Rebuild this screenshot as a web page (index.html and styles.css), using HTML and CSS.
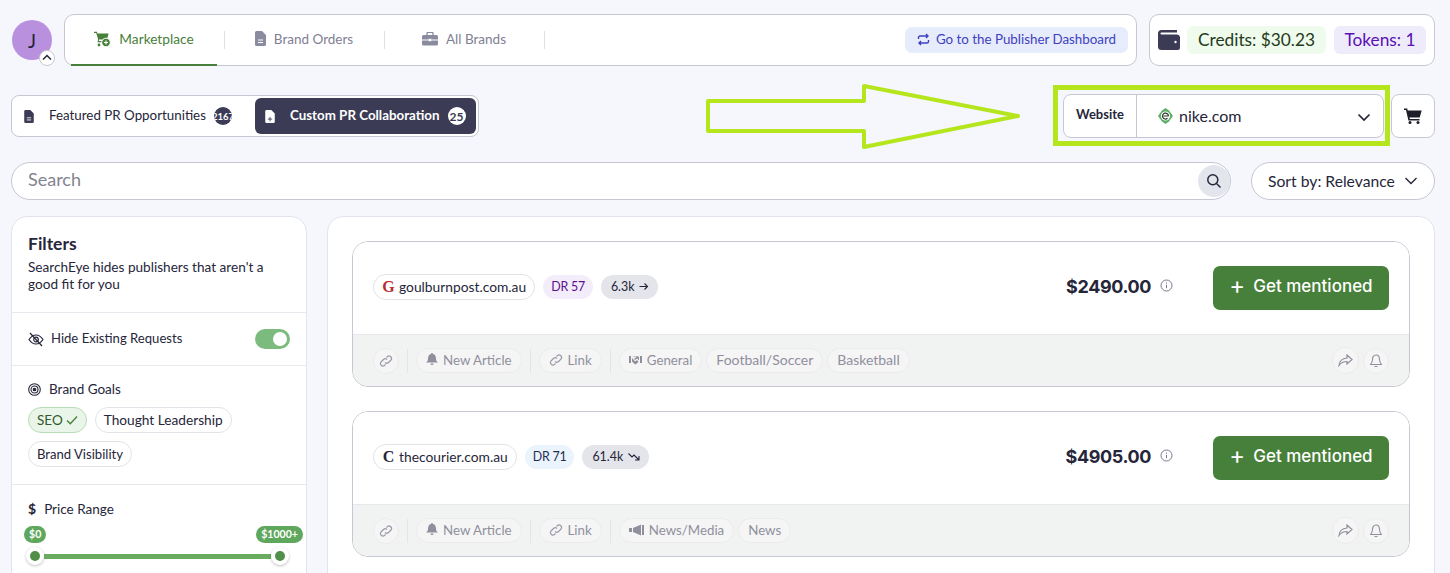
FILE: index.html
```html
<!DOCTYPE html>
<html lang="en">
<head>
<meta charset="utf-8">
<title>Marketplace</title>
<link rel="stylesheet" href="styles.css">
</head>
<body>
<div class="page">
  <header class="top">
    <div class="avatar">J
      <span class="avatar-caret"><svg width="12" height="12" viewBox="0 0 12 12"><path d="M2 7.500 6 3.500l4 4" fill="none" stroke="#26263a" stroke-width="1.500"/></svg></span>
    </div>
    <nav class="nav">
      <a class="nav-item active">
        <svg width="17" height="16" viewBox="0 0 17 16"><path d="M0 .8h3l.4 1.600h11.200l-1.600 6.200H5L4.700 10H13v1.300H3.500l.6-3L2.200 2H0z" fill="#47803a"/><circle cx="5" cy="14" r="1.400" fill="#47803a"/><circle cx="12" cy="11.500" r="4.300" fill="#47803a" stroke="#fff"/><path d="M12 9.500v4M10 11.500h4" stroke="#fff" stroke-width="1.100"/></svg>
        Marketplace</a>
      <a class="nav-item">
        <svg width="11" height="15" viewBox="0 0 11 15"><path d="M1.500 0H7l4 4v9.500a1.500 1.500 0 0 1-1.500 1.500h-8A1.500 1.500 0 0 1 0 13.500v-12A1.500 1.500 0 0 1 1.500 0z" fill="#8a8b9e"/><path d="M3 9h5M3 11.500h5" stroke="#fff"/></svg>
        Brand Orders</a>
      <a class="nav-item">
        <svg width="16" height="14" viewBox="0 0 16 14"><path d="M5 3V1.500A1.200 1.200 0 0 1 6.200.3h3.600A1.200 1.200 0 0 1 11 1.500V3" fill="none" stroke="#8a8b9e" stroke-width="1.300"/><rect y="3" width="16" height="10.500" rx="1.500" fill="#8a8b9e"/><path d="M0 8h6.500M9.500 8H16" stroke="#fff"/><rect x="6.500" y="6.800" width="3" height="2.400" fill="#fff"/></svg>
        All Brands</a>
      <span class="nav-end"></span>
      <a class="publisher">
        <svg width="13" height="13" viewBox="0 0 13 13" fill="none" stroke="#3f3fc0" stroke-width="1.400"><path d="M1.500 6V4.500a1.500 1.500 0 0 1 1.500-1.500h8M9 1l2 2-2 2M11.500 7v1.500a1.500 1.500 0 0 1-1.500 1.500H2M4 8l-2 2 2 2"/></svg>
        Go to the Publisher Dashboard</a>
    </nav>
    <div class="wallet">
      <svg width="22" height="20" viewBox="0 0 22 20"><path d="M3.500 0h15.500v2.500H3.500a1 1 0 0 0 0 2H19a3 3 0 0 1 3 2.500v10.500a2.500 2.500 0 0 1-2.500 2.500h-16A3.500 3.500 0 0 1 0 16.500v-13A3.500 3.500 0 0 1 3.500 0z" fill="#3b3b55"/><circle cx="17.500" cy="12" r="1.200" fill="#fff"/></svg>
      <span class="credits">Credits: $30.23</span>
      <span class="tokens">Tokens: 1</span>
    </div>
  </header>

  <section class="row2">
    <div class="tabs">
      <a class="tab">
        <svg width="10" height="13" viewBox="0 0 11 15"><path d="M1.500 0H7l4 4v9.500a1.500 1.500 0 0 1-1.500 1.500h-8A1.500 1.500 0 0 1 0 13.500v-12A1.500 1.500 0 0 1 1.500 0z" fill="#3b3b55"/><path d="M3 9h5M3 11.500h5" stroke="#fff"/></svg>
        <span class="tab-label">Featured PR Opportunities</span>
        <span class="count dark"><span>2167</span></span>
      </a>
      <a class="tab on">
        <svg width="10" height="13" viewBox="0 0 11 15"><path d="M1.500 0H7l4 4v9.500a1.500 1.500 0 0 1-1.500 1.500h-8A1.500 1.500 0 0 1 0 13.500v-12A1.500 1.500 0 0 1 1.500 0z" fill="#fff"/><path d="M5.500 8v5M3 10.500h5" stroke="#3b3b55"/></svg>
        <span class="tab-label">Custom PR Collaboration</span>
        <span class="count light">25</span>
      </a>
    </div>
    <svg class="big-arrow" width="316" height="68" viewBox="0 0 316 68"><path d="M2 19H158V4L312 34 158 65V49H2z" fill="none" stroke="#b5e61d" stroke-width="4" stroke-linejoin="round"/></svg>
    <div class="highlight">
      <div class="website">
        <span class="website-label">Website</span>
        <span class="website-value">
          <svg width="15" height="16" viewBox="0 0 15 16"><path d="M7.500 0 11 2.500 15 8l-4 5.500L7.500 16 4 13.500 0 8l4-5.500z" fill="#5fae67"/><circle cx="7.500" cy="8" r="4.600" fill="#fff"/><path d="M10.500 8a3 3 0 1 0-1 2.300M5.500 8h5" fill="none" stroke="#26352a" stroke-width="1.200"/></svg>
          <span class="site-name">nike.com</span>
          <svg class="chev" width="14" height="9" viewBox="0 0 14 9"><path d="M1.500 1.500 7 7l5.500-5.500" fill="none" stroke="#26263a" stroke-width="1.700"/></svg>
        </span>
      </div>
    </div>
    <button class="cart">
      <svg width="18" height="16" viewBox="0 0 18 16"><path d="M0 .5h3.200l.5 2h14l-2 7H5.500l.3 1.500H15.500v1.500H4.400L2 2H0z" fill="#1e1e2a"/><circle cx="6" cy="14.500" r="1.500" fill="#1e1e2a"/><circle cx="14" cy="14.500" r="1.500" fill="#1e1e2a"/></svg>
    </button>
  </section>

  <section class="row3">
    <div class="search">
      <span class="search-text">Search</span>
      <span class="search-btn"><svg width="16" height="16" viewBox="0 0 16 16" fill="none" stroke="#26263a" stroke-width="1.500"><circle cx="6.800" cy="6.800" r="5"/><path d="m10.500 10.500 4 4"/></svg></span>
    </div>
    <div class="sort"><span>Sort by: Relevance</span>
      <svg width="14" height="8" viewBox="0 0 14 8"><path d="M1.500 1 7 6.500 12.500 1" fill="none" stroke="#26263a" stroke-width="1.400"/></svg>
    </div>
  </section>

  <main class="content">
    <aside class="filters">
      <div class="f-head">
        <h2>Filters</h2>
        <p>SearchEye hides publishers that aren't a good fit for you</p>
      </div>
      <div class="f-toggle">
        <svg width="16" height="15" viewBox="0 0 16 15" fill="none" stroke="#26263a" stroke-width="1.200"><path d="M1 7.500C3 4.500 5.300 3 8 3s5 1.500 7 4.500c-2 3-4.300 4.500-7 4.500S3 10.500 1 7.500z"/><circle cx="8" cy="7.500" r="2.300"/><path d="m2 1 12 13"/></svg>
        <span class="f-label">Hide Existing Requests</span>
        <span class="switch"><i></i></span>
      </div>
      <div class="f-goals">
        <div class="f-title">
          <svg width="13" height="13" viewBox="0 0 13 13" fill="none" stroke="#26263a" stroke-width="1.100"><circle cx="6.500" cy="6.500" r="5.800"/><circle cx="6.500" cy="6.500" r="3.500"/><circle cx="6.500" cy="6.500" r="1.300" fill="#26263a"/></svg>
          Brand Goals</div>
        <div class="chips">
          <span class="chip sel">SEO <svg width="12" height="10" viewBox="0 0 12 10"><path d="M1 5.500 4.300 8.800 11 1.500" fill="none" stroke="#47803a" stroke-width="1.300"/></svg></span>
          <span class="chip chip-wide">Thought Leadership</span>
          <span class="chip chip-narrow">Brand Visibility</span>
        </div>
      </div>
      <div class="f-price">
        <div class="f-title"><span class="dollar">$</span> Price Range</div>
        <div class="range-labels"><span class="bubble">$0</span><span class="bubble">$1000+</span></div>
        <div class="slider"><span class="thumb"></span><span class="bar"></span><span class="thumb"></span></div>
      </div>
    </aside>

    <section class="results">
      <article class="card">
        <div class="card-main">
          <span class="domain"><span class="logo-g">G</span>goulburnpost.com.au</span>
          <span class="dr purple">DR 57</span>
          <span class="traffic">6.3k <svg width="10" height="9" viewBox="0 0 10 9"><path d="M.5 4.500h8M5.500 1.500l3 3-3 3" fill="none" stroke="#26263a" stroke-width="1.100"/></svg></span>
          <span class="price">$2490.00</span>
          <svg class="info" width="13" height="13" viewBox="0 0 13 13" fill="none" stroke="#77788a"><circle cx="6.500" cy="6.500" r="5.500"/><path d="M6.500 5.800v3.400M6.500 3.500v1.200"/></svg>
          <a class="cta"><span class="plus">+</span>Get mentioned</a>
        </div>
        <div class="card-foot">
          <span class="round"><svg width="14" height="14" viewBox="0 0 14 14" fill="none" stroke="#9a9ba8" stroke-width="1.200"><path d="M6 8.500a2.500 2.500 0 0 0 3.500 0l2.500-2.500A2.500 2.500 0 0 0 8.500 2.500l-1 1M8 5.500a2.500 2.500 0 0 0-3.500 0L2 8a2.500 2.500 0 0 0 3.500 3.500l1-1"/></svg></span>
          <i class="sep"></i>
          <span class="tag"><svg width="12" height="13" viewBox="0 0 12 13"><path d="M6 0a1 1 0 0 1 1 1c2 .5 3 2.200 3 4.500 0 2 .7 3 2 4H0c1.300-1 2-2 2-4C2 3.200 3 1.500 5 1a1 1 0 0 1 1-1zM4.500 10.500h3a1.500 1.500 0 0 1-3 0z" fill="#8f909c"/></svg>New Article</span>
          <i class="sep"></i>
          <span class="tag"><svg width="14" height="14" viewBox="0 0 14 14" fill="none" stroke="#9a9ba8" stroke-width="1.200"><path d="M6 8.500a2.500 2.500 0 0 0 3.500 0l2.500-2.500A2.500 2.500 0 0 0 8.500 2.500l-1 1M8 5.500a2.500 2.500 0 0 0-3.500 0L2 8a2.500 2.500 0 0 0 3.500 3.500l1-1"/></svg>Link</span>
          <i class="sep"></i>
          <span class="tag"><svg width="13" height="10" viewBox="0 0 13 10"><path d="M0 1h2v7H0zM11 1h2v7h-2zM3 2l3-1 1.500 1L5 4l1 1 2-1.500L10 5.500V2L8 1 6.500 1.500 5 1 3 2zM3 3v3.500L5.500 9l1 .5 3-2.500L8 5 6 6.500 4 4z" fill="#8f909c"/></svg>General</span>
          <span class="tag big">Football/Soccer</span>
          <span class="tag big">Basketball</span>
          <span class="foot-right">
            <span class="round lg"><svg width="15" height="13" viewBox="0 0 15 13" fill="none" stroke="#8f909c" stroke-width="1.200"><path d="M9 1l5 4.500L9 10V7.500C5.500 7.500 3 8.500 1 11.500c.3-4 3-7 8-7.500z"/></svg></span>
            <span class="round"><svg width="12" height="14" viewBox="0 0 12 14" fill="none" stroke="#8f909c" stroke-width="1.100"><path d="M6 1c2.500 0 3.500 2 3.500 4.500 0 2.500.7 3.500 2 5H.5c1.300-1.500 2-2.500 2-5C2.500 3 3.500 1 6 1zM4.500 12.500h3"/></svg></span>
          </span>
        </div>
      </article>

      <article class="card">
        <div class="card-main">
          <span class="domain"><span class="logo-c">C</span>thecourier.com.au</span>
          <span class="dr blue">DR 71</span>
          <span class="traffic">61.4k <svg width="12" height="9" viewBox="0 0 12 9"><path d="M.5 1.500 4 5l2-2 4.500 4.500M11 4v4H7" fill="none" stroke="#26263a" stroke-width="1.100"/></svg></span>
          <span class="price">$4905.00</span>
          <svg class="info" width="13" height="13" viewBox="0 0 13 13" fill="none" stroke="#77788a"><circle cx="6.500" cy="6.500" r="5.500"/><path d="M6.500 5.800v3.400M6.500 3.500v1.200"/></svg>
          <a class="cta"><span class="plus">+</span>Get mentioned</a>
        </div>
        <div class="card-foot">
          <span class="round"><svg width="14" height="14" viewBox="0 0 14 14" fill="none" stroke="#9a9ba8" stroke-width="1.200"><path d="M6 8.500a2.500 2.500 0 0 0 3.500 0l2.500-2.500A2.500 2.500 0 0 0 8.500 2.500l-1 1M8 5.500a2.500 2.500 0 0 0-3.500 0L2 8a2.500 2.500 0 0 0 3.500 3.500l1-1"/></svg></span>
          <i class="sep"></i>
          <span class="tag"><svg width="12" height="13" viewBox="0 0 12 13"><path d="M6 0a1 1 0 0 1 1 1c2 .5 3 2.200 3 4.500 0 2 .7 3 2 4H0c1.300-1 2-2 2-4C2 3.200 3 1.500 5 1a1 1 0 0 1 1-1zM4.500 10.500h3a1.500 1.500 0 0 1-3 0z" fill="#8f909c"/></svg>New Article</span>
          <i class="sep"></i>
          <span class="tag"><svg width="14" height="14" viewBox="0 0 14 14" fill="none" stroke="#9a9ba8" stroke-width="1.200"><path d="M6 8.500a2.500 2.500 0 0 0 3.500 0l2.500-2.500A2.500 2.500 0 0 0 8.500 2.500l-1 1M8 5.500a2.500 2.500 0 0 0-3.500 0L2 8a2.500 2.500 0 0 0 3.500 3.500l1-1"/></svg>Link</span>
          <i class="sep"></i>
          <span class="tag"><svg width="15" height="12" viewBox="0 0 15 12"><path d="M0 4h3v4H0zM4 4l8-3.500v11L4 8zM13 1h2v10h-2z" fill="#8f909c"/></svg>News/Media</span>
          <span class="tag">News</span>
          <span class="foot-right">
            <span class="round lg"><svg width="15" height="13" viewBox="0 0 15 13" fill="none" stroke="#8f909c" stroke-width="1.200"><path d="M9 1l5 4.500L9 10V7.500C5.500 7.500 3 8.500 1 11.500c.3-4 3-7 8-7.500z"/></svg></span>
            <span class="round"><svg width="12" height="14" viewBox="0 0 12 14" fill="none" stroke="#8f909c" stroke-width="1.100"><path d="M6 1c2.500 0 3.500 2 3.500 4.500 0 2.500.7 3.500 2 5H.5c1.300-1.500 2-2.500 2-5C2.500 3 3.500 1 6 1zM4.500 12.500h3"/></svg></span>
          </span>
        </div>
      </article>
    </section>
  </main>
</div>
</body>
</html>
```
FILE: styles.css
```css
* { box-sizing: border-box; }
html, body { margin: 0; height: 573px; overflow: hidden; }
body { background: #f5f7fc; font-family: "Lato", "Noto Sans", sans-serif; color: #26263a; }
svg { flex: none; display: block; }
.page { padding: 14px 15px 0 11px; }

.top { display: flex; align-items: flex-start; height: 52px; }
.avatar { position: relative; flex: none; width: 40px; height: 40px; margin: 6px 12px 0 1px; border-radius: 50%; background: #b990de; display: flex; align-items: center; justify-content: center; font-size: 19px; }
.avatar-caret { position: absolute; right: -3px; bottom: -6px; width: 16px; height: 16px; border-radius: 50%; background: #fff; border: 1px solid #c8c9d2; display: flex; align-items: center; justify-content: center; }
.nav { flex: none; width: 1073px; height: 52px; background: #fff; border: 1px solid #c6c7d2; border-radius: 10px; display: flex; align-items: center; padding: 0 8px 0 6px; }
.nav-item { height: 50px; display: flex; align-items: center; justify-content: center; gap: 8px; font-size: 13.5px; color: #7f8094; width: 160px; padding: 0 2px 3px 0; position: relative; }
.nav-item::after { content: ""; position: absolute; right: 0; top: 16px; height: 18px; width: 1px; background: #dfe0e6; }
.nav-item.active { color: #47803a; width: 146px; margin-right: 8px; padding-right: 0; font-size: 13.7px; }
.nav-item.active::after { right: -8px; }
.nav-item.active::before { content: ""; position: absolute; left: 0; right: 0; bottom: -1px; height: 2px; background: #47803a; }
.nav-end { flex: 1; }
.publisher { height: 26px; padding: 0 12px 2px; background: #e6ecfb; border-radius: 7px; color: #3f3fc0; font-size: 13.35px; display: flex; align-items: center; gap: 6px; white-space: nowrap; }
.wallet { flex: none; margin-left: 12px; width: 286px; height: 52px; background: #fff; border: 1px solid #c6c7d2; border-radius: 10px; display: flex; align-items: center; padding: 0 8px; gap: 8px; font-size: 17.3px; }
.wallet svg { margin-right: -1px; }
.credits { height: 28px; width: 139px; padding-bottom: 1px; background: #effbec; border-radius: 6px; display: flex; align-items: center; justify-content: center; color: #1f3a20; }
.tokens { height: 28px; width: 92px; padding-bottom: 1px; background: #eeecfb; border-radius: 6px; display: flex; align-items: center; justify-content: center; color: #5a10b5; }

.row2 { display: flex; align-items: flex-start; margin-top: 19px; height: 66px; }
.tabs { margin-top: 10px; width: 468px; height: 42px; padding: 2px; background: #fff; border: 1px solid #c6c7d2; border-radius: 8px; display: flex; }
.tab { height: 36px; display: flex; align-items: center; border-radius: 6px; font-size: 13.35px; white-space: nowrap; }
.tab:first-child { width: 241px; padding-left: 10px; }
.tab.on { flex: 1; background: #3b3b55; color: #fff; padding-left: 10px; font-weight: 700; }
.tab-label { margin-left: 15px; padding-bottom: 2px; }
.count { width: 18px; height: 18px; border-radius: 50%; display: flex; align-items: center; justify-content: center; font-size: 12px; margin-left: 8px; overflow: hidden; font-weight: 700; }
.count.dark { background: #3b3b55; color: #fff; font-size: 9.5px; }
.count.dark span { flex: none; }
.count.light { background: #fff; color: #3b3b55; }
.big-arrow { margin: -3px 0 0 227px; flex: none; }
.highlight { flex: none; margin-left: 31px; width: 337px; height: 61px; border: 5px solid #b5e61d; padding: 4px 1px 0 5px; }
.website { height: 44px; background: #fff; border: 1px solid #c6c7d2; border-radius: 8px; display: flex; }
.website-label { width: 73px; border-right: 1px solid #c6c7d2; font-size: 13px; font-weight: 700; display: flex; align-items: center; justify-content: center; padding-bottom: 4px; }
.website-value { flex: 1; display: flex; align-items: center; gap: 6px; padding: 0 12px 0 21px; font-size: 16px; }
.site-name { padding-bottom: 2px; }
.chev { margin-left: auto; margin-top: 3px; }
.cart { flex: none; margin: 9px 0 0 1px; width: 44px; height: 44px; background: #fff; border: 1px solid #c6c7d2; border-radius: 8px; display: flex; align-items: center; justify-content: center; padding: 0; }

.row3 { display: flex; gap: 20px; margin-top: 11px; }
.search { flex: none; width: 1220px; height: 38px; background: #fff; border: 1px solid #c6c7d2; border-radius: 19px; display: flex; align-items: center; padding: 0 0 0 16px; font-size: 18px; color: #83848f; }
.search-text { flex: 1; padding-bottom: 5px; }
.search-btn { width: 32px; height: 32px; border-radius: 50%; background: #e3e5ec; display: flex; align-items: center; justify-content: center; }
.sort { flex: none; width: 184px; height: 38px; background: #fff; border: 1px solid #c6c7d2; border-radius: 19px; display: flex; align-items: center; gap: 9px; padding-left: 16px; font-size: 15.7px; white-space: nowrap; }
.sort span { padding-bottom: 1px; }

.content { display: flex; gap: 20px; margin-top: 16px; align-items: flex-start; }
.filters { flex: none; width: 296px; height: 400px; background: #fff; border: 1px solid #e1e4ee; border-radius: 16px; font-size: 13.5px; }
.f-head { padding: 17px 16px 0; height: 96px; border-bottom: 1px solid #e8e9ef; }
.f-head h2 { margin: 0 0 5px; font-size: 17.5px; line-height: 20px; font-weight: 700; }
.f-head p { margin: 0; max-width: 245px; font-size: 13.6px; line-height: 17px; }
.f-toggle { height: 53px; display: flex; align-items: center; padding: 0 16px; border-bottom: 1px solid #e8e9ef; }
.f-label { flex: 1; margin-left: 7px; font-size: 13.1px; padding-bottom: 2px; }
.switch { width: 35px; height: 20px; border-radius: 10px; background: #7cbb7e; display: flex; align-items: center; justify-content: flex-end; padding-right: 3px; }
.switch i { width: 14px; height: 14px; border-radius: 50%; background: #fff; }
.f-goals { height: 119px; padding: 15px 16px 0; border-bottom: 1px solid #e8e9ef; }
.f-title { display: flex; align-items: center; gap: 8px; line-height: 16px; }
.chips { display: flex; flex-wrap: wrap; gap: 8px; margin-top: 10px; }
.chip { height: 26px; padding: 0 8px 1px; border: 1px solid #e2e3e9; border-radius: 13px; display: flex; align-items: center; gap: 3px; font-size: 13.5px; }
.chip-wide { font-size: 13.7px; }
.chip-narrow { font-size: 13.1px; }
.chip.sel { background: #e9f5e8; border-color: #b9dcb9; color: #2f5a2b; }
.f-price { padding: 16px 16px 0; }
.dollar { font-weight: 700; font-size: 14px; }
.range-labels { display: flex; justify-content: space-between; margin: 9px -13px 0 -4px; }
.bubble { height: 17px; padding: 0 5px; background: #5ea75c; color: #fff; border-radius: 9px; font-size: 10.6px; line-height: 17px; font-weight: 700; }
.slider { display: flex; align-items: center; margin: 4px 1px 0 -2px; }
.thumb { width: 18px; height: 18px; border-radius: 50%; background: #fff; box-shadow: 0 1px 3px rgba(0,0,0,.25); display: flex; align-items: center; justify-content: center; flex: none; }
.thumb::after { content: ""; width: 10px; height: 10px; border-radius: 50%; background: #4f8f48; }
.bar { flex: 1; height: 5px; background: #6aac5f; }

.results { flex: none; width: 1108px; height: 400px; background: #fff; border: 1px solid #e1e4ee; border-radius: 16px; padding: 24px 24px 0; }
.card { height: 146px; border: 1px solid #c6c7d2; border-radius: 16px; overflow: hidden; margin-bottom: 24px; }
.card-main { height: 93px; background: #fff; display: flex; align-items: center; padding: 0 20px; border-bottom: 1px solid #e6e7ea; }
.domain { height: 26px; margin-top: -2px; padding: 0 8px 1px 7px; border: 1px solid #e2e3e9; border-radius: 13px; display: flex; align-items: center; font-size: 13.8px; gap: 3px; }
.logo-g, .logo-c { width: 15px; display: flex; justify-content: center; font-family: "Liberation Serif", serif; font-weight: 700; font-size: 16px; }
.logo-g { color: #bb2a30; }
.logo-c { color: #26263a; }
.dr { margin: -2px 0 0 8px; height: 24px; padding: 0 8px 1px; border-radius: 12px; display: flex; align-items: center; font-size: 12.4px; letter-spacing: -.2px; }
.dr.purple { background: #f3edfb; color: #5a1090; }
.dr.blue { background: #ebf3fd; color: #1e3050; }
.traffic { margin: -2px 0 0 8px; height: 24px; padding: 0 9px 1px 10px; border-radius: 12px; background: #e3e5ea; display: flex; align-items: center; gap: 5px; font-size: 12.4px; }
.price { margin-left: auto; padding-bottom: 4px; font-family: "Inter", sans-serif; font-size: 18px; font-weight: 700; letter-spacing: -.4px; }
.info { margin: 0 0 5px 9px; }
.cta { margin-left: 40px; width: 176px; height: 44px; padding-bottom: 4px; background: #47803a; border-radius: 7px; color: #fff; display: flex; align-items: center; justify-content: center; gap: 8px; font-family: "Inter", sans-serif; font-size: 17px; font-weight: 500; }
.plus { font-size: 24px; font-weight: 400; line-height: 24px; margin-top: -1px; }
.card-foot { height: 51px; background: #f1f2f2; display: flex; align-items: center; padding: 0 20px; gap: 4px; color: #8f909c; font-size: 13.3px; }
.round { width: 26px; height: 26px; border-radius: 13px; background: #f5f5f6; border: 1px solid #ebebed; display: flex; align-items: center; justify-content: center; }
.round.lg { width: 27px; height: 27px; }
.sep { width: 1px; height: 24px; background: #e4e5e8; margin: 0 4px; }
.tag { height: 25px; padding: 0 9px 2px; border: 1px solid #ebebed; background: #f5f5f6; border-radius: 13px; display: flex; align-items: center; gap: 5px; white-space: nowrap; }
.tag.big { font-size: 14px; }
.foot-right { margin-left: auto; display: flex; gap: 4px; align-items: center; }
```
